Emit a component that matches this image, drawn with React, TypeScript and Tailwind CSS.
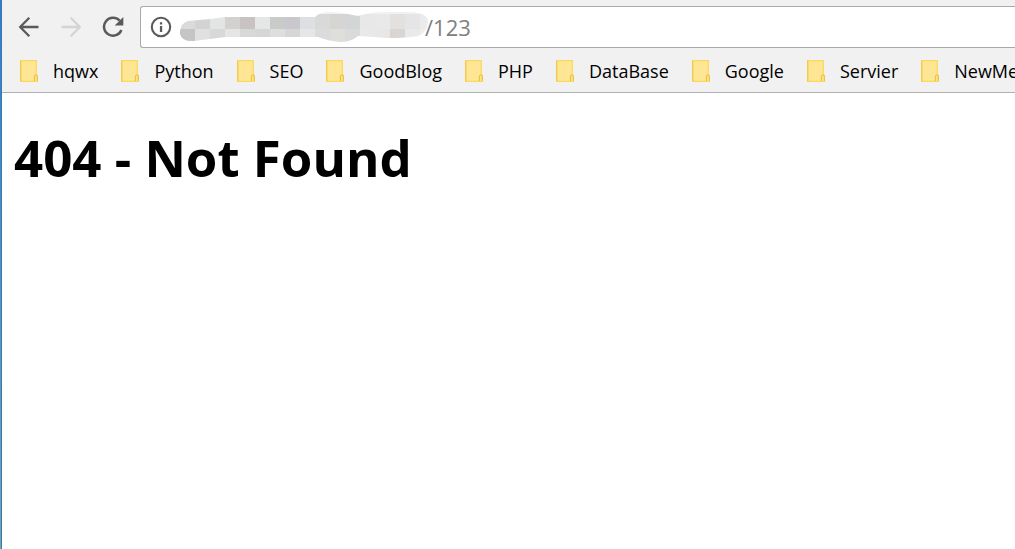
import { useState } from "react";

const folders = ["hqwx", "Python", "SEO", "GoodBlog", "PHP", "DataBase", "Google", "Servier", "NewMedia"];

// one entry per 15px column: [upper cell, lower cell]
const mosaic = [
  ["#dadad9", "#c5c5c5"],
  ["#d3d3d3", "#dfe0e0"],
  ["#e3e5e4", "#d9d7d7"],
  ["#d2d1d0", "#e5e5e5"],
  ["#c8c2c2", "#d8d8d8"],
  ["#e5e7e6", "#d5d6d5"],
  ["#c9cbc8", "#dededc"],
  ["#cac8ce", "#d6d6d6"],
  ["#dddfe2", "#e6e6e9"],
  ["#d9d9d9", "#dbdbdb"],
  ["#d6d5d4", "#dededb"],
  ["#d3d6d7", "#d9dbda"],
  ["#e8e8e8", "#e9e9ea"],
  ["#e9e9e9", "#e7e7e7"],
  ["#e3e1df", "#d8d5d3"],
  ["#e5e5e5", "#e9e9e9"],
  ["#ebebeb", "#eeeeee"],
];

function BackIcon() {
  return (
    <svg width="22" height="22" viewBox="0 0 22 22" fill="none" stroke="currentColor" strokeWidth="2.3">
      <path d="M20.5 11H2.5M11.3 1.8L2.2 11l9.1 9.2" />
    </svg>
  );
}

function ReloadIcon() {
  return (
    <svg width="22" height="22" viewBox="0 0 22 22" fill="none">
      <path d="M17.6 4.6A9 9 0 1 0 19.4 14" stroke="currentColor" strokeWidth="2.4" />
      <path d="M21.3 1v8.6h-8.6z" fill="currentColor" />
    </svg>
  );
}

function InfoIcon() {
  return (
    <svg width="22" height="22" viewBox="0 0 22 22" fill="none">
      <circle cx="11" cy="11" r="9.2" stroke="currentColor" strokeWidth="2.1" />
      <path d="M9.9 6.2h2.3v2.2H9.9zM9.9 10h2.3v6H9.9z" fill="currentColor" />
    </svg>
  );
}

function FolderIcon() {
  return (
    <svg width="18" height="22" viewBox="0 0 18 22">
      <path d="M.7.7h15.6v14.1l1.1.6v5.9H.7z" fill="#ffe694" stroke="#fbd95c" strokeWidth="1.3" />
      <path d="M.7.4v21" stroke="#eec94f" strokeWidth="1.2" />
      <path d="M14.4 21v-5c0-1.4 3-1.4 3 0v5" fill="#ffe182" stroke="#e9bf3d" />
    </svg>
  );
}

function HiddenHost() {
  return (
    <svg width="249" height="32" viewBox="0 0 249 32" className="shrink-0">
      <clipPath id="smear">
        <path d="M0 20Q1 12 8 10L30 8L45 6H135Q140 1 148 1Q162 1 168 3L178 5Q190 1 205 1H232Q248 2 248 11Q247 22 238 25Q225 27 208 27L178 25Q171 31 160 31Q148 30 138 26H45L30 28L14 30Q2 31 0 23Z" />
      </clipPath>
      <g clipPath="url(#smear)" shapeRendering="crispEdges">
        {mosaic.map(([upper, lower], i) => (
          <g key={i}>
            <rect x={i * 15} y="3" width="15" height="15" fill={upper} />
            <rect x={i * 15} y="0" width="15" height="3" fill="#f1f1f1" />
            <rect x={i * 15} y="18" width="15" height="14" fill={lower} />
          </g>
        ))}
      </g>
    </svg>
  );
}

function Toolbar() {
  const [path, setPath] = useState("/123");

  return (
    <div className="flex items-center pt-1.5 pl-4 text-[#5a5a5a]">
      <button type="button" aria-label="Back">
        <BackIcon />
      </button>
      <button type="button" aria-label="Forward" disabled className="ml-5 rotate-180 text-[#d4d4d4]">
        <BackIcon />
      </button>
      <button type="button" aria-label="Reload" className="ml-5">
        <ReloadIcon />
      </button>
      <div className="ml-4 flex h-[42px] flex-1 items-center rounded-l-[3px] border border-r-0 border-[#a9a9a9] bg-white pl-[9px]">
        <button type="button" aria-label="Site information" className="mr-2">
          <InfoIcon />
        </button>
        <HiddenHost />
        <input
          aria-label="Address"
          value={path}
          onChange={(e) => setPath(e.target.value)}
          className="-ml-1 min-w-0 flex-1 text-[22px] text-[#808080] outline-none"
        />
      </div>
    </div>
  );
}

function BookmarkBar() {
  return (
    <nav aria-label="Bookmarks" className="flex h-[44px] items-center gap-[23px] overflow-hidden pt-0.5 pl-[18px]">
      {folders.map((name) => (
        <button key={name} type="button" className="flex shrink-0 items-center gap-[15px] text-lg text-black">
          <FolderIcon />
          {name}
        </button>
      ))}
    </nav>
  );
}

export default function App() {
  return (
    <div className="flex min-h-screen bg-white font-['Open_Sans','Noto_Sans',sans-serif]">
      <div className="w-px bg-linear-to-b from-[#3a7bbf] to-[#7fa39d]" />
      <div className="w-px bg-[#2f7bc0]" />
      <div className="min-w-0 flex-1">
        <header className="border-b border-[#b0b0b0] bg-[#f1f1f1]">
          <Toolbar />
          <BookmarkBar />
        </header>
        <main className="px-3 py-[30px]">
          <h1 className="text-[51px] leading-[68px] font-bold text-black">404 - Not Found</h1>
        </main>
      </div>
    </div>
  );
}
